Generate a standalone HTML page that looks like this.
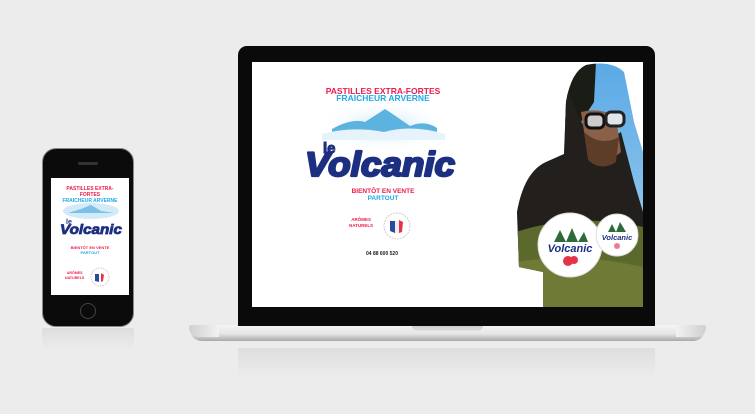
<!DOCTYPE html>
<html><head><meta charset="utf-8"><style>
*{margin:0;padding:0;box-sizing:border-box}
body{width:755px;height:414px;background:#ececec;position:relative;overflow:hidden;font-family:"Liberation Sans",Arial,sans-serif}
.abs{position:absolute}
.t{position:absolute;font-weight:bold;text-align:center;white-space:nowrap}
.r{color:#ec1b4b}.b{color:#1fa9e8}
</style></head><body>
<div class="abs" style="left:238px;top:348px;width:417px;height:30px;background:linear-gradient(#dedede,#ececec)"></div>
<div class="abs" style="left:189px;top:325px;width:517px;height:16px;border-radius:3px 3px 14px 14px;background:linear-gradient(#f4f4f4 0%,#e6e6e6 55%,#a8a8a8 100%)"></div>
<div class="abs" style="left:189px;top:325px;width:30px;height:12px;border-radius:3px 0 0 12px;background:linear-gradient(90deg,#cfcfcf,#f2f2f2)"></div>
<div class="abs" style="left:676px;top:325px;width:30px;height:12px;border-radius:0 3px 12px 0;background:linear-gradient(270deg,#cfcfcf,#f2f2f2)"></div>
<div class="abs" style="left:412px;top:325px;width:71px;height:6px;border-radius:0 0 5px 5px;background:linear-gradient(#c8c8c8,#e0e0e0)"></div>
<div class="abs" style="left:238px;top:46px;width:417px;height:280px;background:#0a0a0a;border-radius:9px 9px 0 0"></div>
<div class="abs" style="left:252px;top:62px;width:391px;height:245px;background:#fff;overflow:hidden">
 <div class="t r" style="left:0;width:262px;top:24px;font-size:8.5px">PASTILLES EXTRA-FORTES</div>
 <div class="t b" style="left:0;width:262px;top:31px;font-size:8.5px">FRAICHEUR ARVERNE</div>
 <svg class="abs" style="left:45px;top:34px" width="175" height="85" viewBox="0 0 175 85">
  <defs><radialGradient id="g" cx="50%" cy="55%" r="50%"><stop offset="0" stop-color="#bfe2f6"/><stop offset="1" stop-color="#fff" stop-opacity="0"/></radialGradient></defs>
  <ellipse cx="87" cy="28" rx="65" ry="26" fill="url(#g)"/>
  <path d="M35 33 Q55 22 68 26 L88 13 Q103 23 113 30 Q128 24 140 32 L140 38 L35 38Z" fill="#5cb3e0"/>
  <path d="M25 38 Q55 30 87 36 Q115 28 148 38 L148 44 L25 44Z" fill="#e6f3fb"/>
  <text x="26" y="57" font-family="Liberation Sans,sans-serif" font-weight="bold" font-size="15" fill="#1d2f80" stroke="#1d2f80" stroke-width="1">le</text>
  <text x="8" y="80" font-family="Liberation Sans,sans-serif" font-weight="bold" font-style="italic" font-size="34" fill="#1d2f80" stroke="#1d2f80" stroke-width="2.2" stroke-linejoin="round" textLength="150" lengthAdjust="spacingAndGlyphs">Volcanic</text>
 </svg>
 <div class="t r" style="left:0;width:262px;top:126px;font-size:6.5px">BIENTÔT EN VENTE</div>
 <div class="t b" style="left:0;width:262px;top:133px;font-size:6.5px">PARTOUT</div>
 <div class="t r" style="left:97px;top:155px;font-size:4.5px;line-height:6px">ARÔMES<br>NATURELS</div>
 <svg class="abs" style="left:130px;top:149px" width="30" height="30"><circle cx="15" cy="15" r="13" fill="#fff" stroke="#ccc" stroke-dasharray="2 1"/><path d="M8 10 L13 10 L13 22 L8 20Z" fill="#2a4aa0"/><path d="M13 10 L17 10 L17 22 L13 22Z" fill="#eee"/><path d="M17 9 L21 11 L20 21 L17 22Z" fill="#e5334a"/></svg>
 <div class="t" style="left:114px;top:189px;font-size:5px;color:#222">04 88 600 520</div>
 <svg class="abs" style="left:264px;top:0" width="127" height="245" viewBox="0 0 127 245">
  <defs>
   <clipPath id="c"><path d="M70 3 Q95 -2 108 10 L112 30 L118 60 L127 90 L127 245 L27 245 L27 210 L3 205 L1 150 Q8 110 30 100 L48 92 L50 40 Q55 10 70 3Z"/></clipPath>
   <linearGradient id="sky" x1="0" y1="0" x2="0" y2="1"><stop offset="0" stop-color="#5aa9e6"/><stop offset="1" stop-color="#a8d4f0"/></linearGradient>
  </defs>
  <g clip-path="url(#c)">
   <rect width="127" height="245" fill="url(#sky)"/>
   <path d="M45 0 L80 0 L78 40 L65 60 L45 60Z" fill="#1a1d15"/>
   <path d="M50 20 Q60 55 75 75 Q90 80 105 70 L118 120 L127 150 L127 245 L0 245 L0 100 Q20 95 45 90Z" fill="#231f1c"/>
   <path d="M65 50 Q85 45 100 55 L105 90 Q88 105 72 95Z" fill="#8a6048"/>
   <path d="M68 70 Q85 85 103 75 L100 100 Q85 110 72 98Z" fill="#5d3d28"/>
   <rect x="70" y="52" width="18" height="14" rx="5" fill="#ccc" stroke="#111" stroke-width="3"/>
   <rect x="90" y="50" width="18" height="14" rx="5" fill="#e0e6ea" stroke="#222" stroke-width="3"/>
   <path d="M0 170 Q60 150 127 165 L127 245 L0 245Z" fill="#5b6a2c"/>
   <path d="M0 200 Q60 190 127 205 L127 245 L0 245Z" fill="#6e7a36"/>
  </g>
  <circle cx="54" cy="183" r="32" fill="#fff" stroke="#ddd"/>
  <text x="54" y="190" font-size="11" font-weight="bold" font-style="italic" fill="#1d2f80" text-anchor="middle" font-family="Liberation Sans,sans-serif">Volcanic</text>
  <circle cx="52" cy="199" r="5" fill="#e5334a"/><circle cx="58" cy="198" r="4" fill="#e5334a"/>
  <path d="M38 180 L44 168 L50 180 L56 166 L62 180 L68 170 L72 180Z" fill="#2f6b3a"/>
  <circle cx="101" cy="173" r="21" fill="#fff" stroke="#ddd"/>
  <text x="101" y="178" font-size="7.5" font-weight="bold" font-style="italic" fill="#1d2f80" text-anchor="middle" font-family="Liberation Sans,sans-serif">Volcanic</text>
  <path d="M92 170 L96 162 L100 170 L104 160 L110 170Z" fill="#2f6b3a"/>
  <circle cx="101" cy="184" r="3" fill="#ee7b90"/>
 </svg>
</div>
<div class="abs" style="left:42px;top:328px;width:92px;height:22px;background:linear-gradient(#dedede,#ececec);border-radius:0 0 10px 10px"></div>
<div class="abs" style="left:42px;top:148px;width:92px;height:179px;background:#0b0b0b;border-radius:14px;border:1px solid #888"></div>
<div class="abs" style="left:78px;top:162px;width:20px;height:3px;background:#333;border-radius:2px"></div>
<div class="abs" style="left:80px;top:303px;width:16px;height:16px;border:1px solid #444;border-radius:50%"></div>
<div class="abs" style="left:51px;top:178px;width:78px;height:117px;background:#fff;overflow:hidden">
 <div class="t r" style="left:0;width:78px;top:8px;font-size:5px;line-height:6px">PASTILLES EXTRA-<br>FORTES</div>
 <div class="t b" style="left:0;width:78px;top:20px;font-size:5px">FRAICHEUR ARVERNE</div>
 <svg class="abs" style="left:5px;top:25px" width="70" height="35" viewBox="0 0 70 35">
  <ellipse cx="35" cy="8" rx="28" ry="8" fill="#d3ebf8"/>
  <path d="M12 10 L25 6 L35 2 L45 8 L58 10Z" fill="#7cc0e6"/>
  <text x="10" y="21" font-size="7" font-weight="bold" fill="#1d2f80" font-family="Liberation Sans,sans-serif">le</text>
  <text x="4" y="31" font-size="14" font-weight="bold" font-style="italic" fill="#1d2f80" stroke="#1d2f80" stroke-width="0.8" font-family="Liberation Sans,sans-serif" textLength="62" lengthAdjust="spacingAndGlyphs">Volcanic</text>
 </svg>
 <div class="t r" style="left:0;width:78px;top:67px;font-size:4px">BIENTÔT EN VENTE</div>
 <div class="t b" style="left:0;width:78px;top:72px;font-size:4px">PARTOUT</div>
 <div class="t r" style="left:14px;top:93px;font-size:3.6px;line-height:5px">ARÔMES<br>NATURELS</div>
 <svg class="abs" style="left:39px;top:89px" width="20" height="20"><circle cx="10" cy="10" r="9" fill="#fff" stroke="#ccc" stroke-dasharray="1.5 1"/><path d="M5 7 L9 7 L9 15 L5 14Z" fill="#2a4aa0"/><path d="M11 6 L14 8 L13 14 L11 15Z" fill="#e5334a"/></svg>
</div>
</body></html>
